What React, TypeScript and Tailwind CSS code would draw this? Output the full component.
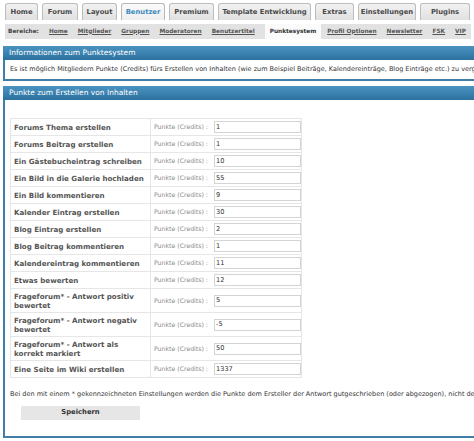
import React from "react";

const tabs = [
  { label: "Home", w: 33 },
  { label: "Forum", w: 36 },
  { label: "Layout", w: 35 },
  { label: "Benutzer", w: 44, active: true },
  { label: "Premium", w: 45 },
  { label: "Template Entwicklung", w: 93 },
  { label: "Extras", w: 39 },
  { label: "Einstellungen", w: 58 },
  { label: "Plugins", w: 50 },
];

const areas = [
  "Home",
  "Mitglieder",
  "Gruppen",
  "Moderatoren",
  "Benutzertitel",
  "Punktesystem",
  "Profil Optionen",
  "Newsletter",
  "FSK",
  "VIP",
];

const rows: { label: string; value: string; tall?: boolean }[] = [
  { label: "Forums Thema erstellen", value: "1" },
  { label: "Forums Beitrag erstellen", value: "1" },
  { label: "Ein Gästebucheintrag schreiben", value: "10" },
  { label: "Ein Bild in die Galerie hochladen", value: "55" },
  { label: "Ein Bild kommentieren", value: "9" },
  { label: "Kalender Eintrag erstellen", value: "30" },
  { label: "Blog Eintrag erstellen", value: "2" },
  { label: "Blog Beitrag kommentieren", value: "1" },
  { label: "Kalendereintrag kommentieren", value: "11" },
  { label: "Etwas bewerten", value: "12" },
  { label: "Frageforum* - Antwort positiv bewertet", value: "5", tall: true },
  { label: "Frageforum* - Antwort negativ bewertet", value: "-5", tall: true },
  { label: "Frageforum* - Antwort als korrekt markiert", value: "50", tall: true },
  { label: "Eine Seite im Wiki erstellen", value: "1337" },
];

function PanelHeader({ title }: { title: string }) {
  return (
    <div className="h-[14px] flex items-center pl-[6px] bg-gradient-to-b from-[#4a94c2] to-[#2d719e] text-white text-[7.5px] leading-none whitespace-nowrap">
      {title}
    </div>
  );
}

export default function App() {
  return (
    <div
      className="w-[474px] h-[441px] overflow-hidden bg-white"
      style={{ fontFamily: '"DejaVu Sans", Verdana, sans-serif' }}
    >
      {/* main navigation tabs */}
      <div className="flex gap-[4px] pl-[5px] pt-[3px] h-[20px] items-end">
        {tabs.map((t) => (
          <div
            key={t.label}
            style={{ width: t.w }}
            className={`h-[17px] shrink-0 rounded-t-[3px] border border-b-0 flex items-center justify-center text-[6.8px] font-bold leading-none whitespace-nowrap ${
              t.active
                ? "border-[#b8b8b8] bg-gradient-to-b from-[#fafafa] to-[#efefef] text-[#3f8dbb]"
                : "border-[#bdbdbd] bg-gradient-to-b from-[#f2f2f2] to-[#e0e0e0] text-[#4a4a4a]"
            }`}
          >
            {t.label}
          </div>
        ))}
      </div>

      {/* area links */}
      <div className="mt-[4px] ml-[5px] w-[466px] h-[15px] bg-[#e2e2e2] flex items-center pl-[3px] text-[5.8px] font-bold leading-none whitespace-nowrap text-[#444] overflow-hidden">
        <span className="mr-[10px]">Bereiche:</span>
        {areas.map((a) =>
          a === "Punktesystem" ? (
            <span
              key={a}
              className="h-full flex items-center px-[5px] mr-[6px] bg-[#fbfbfb] text-[#333]"
            >
              {a}
            </span>
          ) : (
            <span key={a} className="underline mr-[10px] text-[#555]">
              {a}
            </span>
          )
        )}
      </div>

      {/* info panel */}
      <div className="mt-[7px] ml-[3px] w-[520px]">
        <PanelHeader title="Informationen zum Punktesystem" />
        <div className="h-[21px] border-l-[2px] border-b-[2px] border-[#3f7ea6] flex items-center pl-[5px] text-[6.5px] text-[#333] whitespace-nowrap">
          Es ist möglich Mitgliedern Punkte (Credits) fürs Erstellen von Inhalten
          (wie zum Beispiel Beiträge, Kalendereinträge, Blog Einträge etc.) zu
          vergeben
        </div>
      </div>

      {/* points panel */}
      <div className="mt-[5px] ml-[3px] w-[520px]">
        <PanelHeader title="Punkte zum Erstellen von Inhalten" />
        <div className="h-[338px] border-l-[2px] border-b-[2px] border-[#3f7ea6] pl-[5px] pt-[18px]">
          <table className="border-collapse w-[292px] table-fixed">
            <tbody>
              {rows.map((r) => (
                <tr key={r.label} className={r.tall ? "h-[24px]" : "h-[17px]"}>
                  <td className="w-[140px] border border-[#e6e6e6] pl-[3px] pr-[1px] text-[7.1px] font-bold leading-[9px] text-[#555] align-middle">
                    {r.label}
                  </td>
                  <td className="border border-[#e6e6e6] pl-[3px] align-middle">
                    <div className="flex items-center">
                      <span className="text-[6.2px] text-[#8a8a8a] whitespace-nowrap w-[60px]">
                        Punkte (Credits) :
                      </span>
                      <div className="w-[87px] h-[12px] border border-[#d4d4d4] bg-white flex items-center pl-[1px] text-[6.6px] text-[#333] leading-none">
                        {r.value}
                      </div>
                    </div>
                  </td>
                </tr>
              ))}
            </tbody>
          </table>

          <div className="mt-[12px] text-[6.5px] text-[#333] whitespace-nowrap">
            Bei den mit einem * gekennzeichneten Einstellungen werden die Punkte dem
            Ersteller der Antwort gutgeschrieben (oder abgezogen), nicht dem
            Bewerter.
          </div>

          <div className="mt-[6px] ml-[11px] w-[119px] h-[14px] bg-[#e6e6e6] flex items-center justify-center text-[6.8px] font-bold text-[#333] leading-none">
            Speichern
          </div>
        </div>
      </div>
    </div>
  );
}
